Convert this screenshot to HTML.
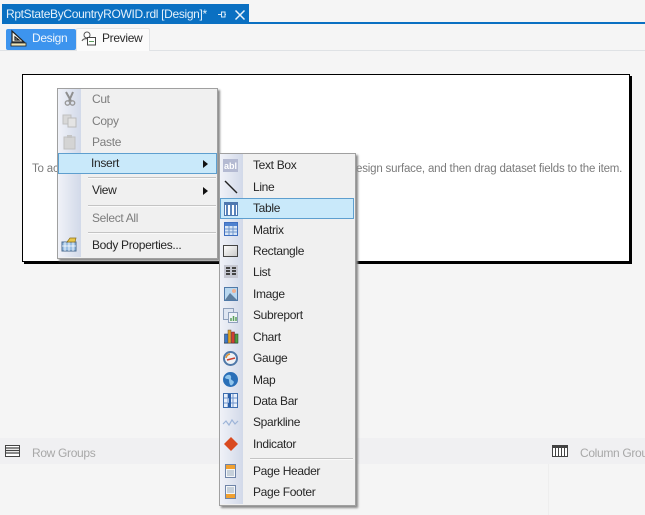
<!DOCTYPE html>
<html><head><meta charset="utf-8">
<style>
html,body{margin:0;padding:0;background:#f5f5f5}
#p{position:relative;width:645px;height:515px;overflow:hidden;background:#f5f5f5;font-family:"Liberation Sans",sans-serif;font-size:12px;color:#262626;filter:blur(.3px)}
#p div{position:absolute}
.t{white-space:nowrap;line-height:14px;height:14px;letter-spacing:-.33px}
.g{color:#7d7d7d}
.s{background:#c4c4c4;height:1px;border-bottom:1px solid #fafafa}
svg{position:absolute;overflow:visible}
</style></head><body><div id="p">

<div style="left:2px;top:4px;width:247px;height:20px;background:#0a70c2"></div>
<div style="left:249px;top:22px;width:396px;height:2px;background:#0a70c2"></div>
<div class="t" style="left:6px;top:7px;color:#e4f0fa">RptStateByCountryROWID.rdl [Design]*</div>
<svg style="left:217px;top:10px" width="12" height="9"><path d="M1 4.500H4M4.500 2V7H8V2ZM8 4.500H9" fill="none" stroke="#dcebf8" stroke-width="1"/></svg>
<svg style="left:235px;top:10px" width="10" height="10"><path d="M.5 .5L9.500 9.500M9.500 .5L.5 9.500" stroke="#e8f2fb" stroke-width="1.500"/></svg>

<div style="left:0;top:50px;width:645px;height:1px;background:#dfe2e5"></div>
<div style="left:76px;top:28px;width:72px;height:22px;background:#fbfbfb;border:1px solid #e2e4e6;border-bottom:none;border-radius:2px 2px 0 0"></div>
<div style="left:6px;top:29px;width:70px;height:21px;background:#3d94ee;border-radius:2px"></div>
<svg style="left:10px;top:30px" width="17" height="17"><path d="M2 1V12H14L2 1ZM5 7V10H9Z" fill="#f4f4ea" stroke="#222" stroke-width="1.200"/><rect x="1" y="13" width="15" height="3" fill="#eee5b8" stroke="#222" stroke-width=".8"/></svg>
<div class="t" style="left:32px;top:31px;color:#eef5fd">Design</div>
<svg style="left:81px;top:31px" width="16" height="15"><circle cx="6" cy="4" r="3" fill="#fff" stroke="#555"/><path d="M1 10C2 7 8 7 9 9" fill="#eee" stroke="#555"/><rect x="6.500" y="6.500" width="8" height="7.500" fill="#fff" stroke="#444"/><path d="M8 10.500H13" stroke="#5a9a5a"/></svg>
<div class="t" style="left:102px;top:31px;color:#2a2a2a">Preview</div>

<div style="left:22px;top:74px;width:606px;height:186px;background:#fff;border:1px solid #000;box-shadow:2px 2px 0 #000"></div>
<div class="t" style="left:32px;top:162px;color:#7b7b7b;font-size:11.500px;letter-spacing:-.19px">To ac</div>
<div class="t" style="left:356px;top:162px;color:#7b7b7b;font-size:11.500px;letter-spacing:-.19px">esign surface, and then drag dataset fields to the item.</div>

<div style="left:0;top:438px;width:645px;height:26px;background:#f0f0f2"></div>
<div style="left:548px;top:464px;width:1px;height:51px;background:#eeeeee"></div>
<svg style="left:5px;top:445px" width="16" height="13"><rect x=".5" y=".5" width="14" height="11" fill="#fff" stroke="#444"/><path d="M0 3H15M0 5.500H15M0 8H15" stroke="#444" stroke-width="1.200"/></svg>
<div class="t" style="left:32px;top:446px;color:#a8a8a8">Row Groups</div>
<svg style="left:552px;top:445px" width="16" height="13"><rect x=".5" y=".5" width="15" height="11" fill="#fff" stroke="#444"/><rect x="0" y="0" width="16" height="3" fill="#444"/><path d="M3.500 0V12M6.500 0V12M9.500 0V12M12.500 0V12" stroke="#444"/></svg>
<div class="t" style="left:580px;top:446px;color:#a8a8a8">Column Groups</div>

<!-- menu 1 -->
<div style="left:57px;top:88px;width:159px;height:169px;background:#f0f0f0;border:1px solid #a0a0a0;box-shadow:2px 2px 2px #8a8a8a"></div>
<div style="left:58px;top:89px;width:23px;height:168px;background:linear-gradient(90deg,#f0f2f8,#d2d9e9)"></div>
<div style="left:58px;top:153px;width:157px;height:19px;background:#c9e9fa;border:1px solid #5e9fcf"></div>
<div class="t g" style="left:92px;top:92px">Cut</div>
<div class="t g" style="left:92px;top:114px">Copy</div>
<div class="t g" style="left:92px;top:135px">Paste</div>
<div class="t" style="left:91px;top:156px">Insert</div>
<div class="t" style="left:92px;top:183px">View</div>
<div class="t g" style="left:92px;top:211px">Select All</div>
<div class="t" style="left:92px;top:238px">Body Properties...</div>
<div class="s" style="left:88px;top:177px;width:128px"></div>
<div class="s" style="left:88px;top:205px;width:128px"></div>
<div class="s" style="left:88px;top:232px;width:128px"></div>
<svg style="left:203px;top:160px" width="5" height="8"><path d="M0 0L5 4L0 8Z" fill="#111"/></svg>
<svg style="left:203px;top:187px" width="5" height="8"><path d="M0 0L5 4L0 8Z" fill="#111"/></svg>
<svg style="left:63px;top:91px" width="14" height="16"><path d="M3 1L8 10M10 1L6 10" stroke="#8f8f8f" stroke-width="2"/><circle cx="4.500" cy="12" r="2.200" fill="none" stroke="#999" stroke-width="1.400"/><circle cx="9.500" cy="12" r="2.200" fill="none" stroke="#999" stroke-width="1.400"/></svg>
<svg style="left:62px;top:114px" width="16" height="14"><rect x="1" y="1" width="8" height="9" fill="#d8d8d8" stroke="#c0c0c0"/><rect x="6" y="4" width="8" height="9" fill="#e4e4e4" stroke="#bbb"/></svg>
<svg style="left:63px;top:135px" width="14" height="15"><rect x="1" y="2" width="11" height="12" fill="#d4d4d4" stroke="#c0c0c0"/><rect x="4" y="0" width="5" height="3" fill="#c4c4c4"/></svg>
<svg style="left:61px;top:237px" width="17" height="15"><rect x="1" y="5" width="14" height="9" fill="#9cc0e4" stroke="#4a6a8e"/><path d="M4 5V14M8 5V14M12 5V14M1 9H15" stroke="#fff" stroke-width=".8"/><path d="M6 5L9 1H15L14 5Z" fill="#e8c64a" stroke="#8a6f1a" stroke-width=".7"/></svg>

<!-- menu 2 -->
<div style="left:219px;top:153px;width:135px;height:351px;background:#f0f0f0;border:1px solid #a0a0a0;box-shadow:2px 2px 2px #8a8a8a"></div>
<div style="left:220px;top:154px;width:23px;height:350px;background:linear-gradient(90deg,#f0f2f8,#d2d9e9)"></div>
<div style="left:220px;top:198px;width:132px;height:19px;background:#c9e9fa;border:1px solid #5e9fcf"></div>
<div class="t" style="left:253px;top:158px">Text Box</div>
<div class="t" style="left:253px;top:180px">Line</div>
<div class="t" style="left:253px;top:201px">Table</div>
<div class="t" style="left:253px;top:223px">Matrix</div>
<div class="t" style="left:253px;top:244px">Rectangle</div>
<div class="t" style="left:253px;top:265px">List</div>
<div class="t" style="left:253px;top:287px">Image</div>
<div class="t" style="left:253px;top:308px">Subreport</div>
<div class="t" style="left:253px;top:330px">Chart</div>
<div class="t" style="left:253px;top:351px">Gauge</div>
<div class="t" style="left:253px;top:373px">Map</div>
<div class="t" style="left:253px;top:394px">Data Bar</div>
<div class="t" style="left:253px;top:415px">Sparkline</div>
<div class="t" style="left:253px;top:437px">Indicator</div>
<div class="t" style="left:253px;top:464px">Page Header</div>
<div class="t" style="left:253px;top:485px">Page Footer</div>
<div class="s" style="left:250px;top:458px;width:103px"></div>

<svg style="left:223px;top:158px" width="16" height="15"><rect x="0" y="1" width="15" height="13" fill="#b4bad2"/><text x="1" y="11" font-size="9" font-family="Liberation Sans,sans-serif" fill="#fff" font-weight="bold">abl</text></svg>
<svg style="left:224px;top:180px" width="14" height="14"><path d="M1 1L13 13" stroke="#222" stroke-width="1.400"/></svg>
<svg style="left:224px;top:202px" width="15" height="14"><rect x=".5" y=".5" width="13" height="13" fill="#fff" stroke="#4e78b0"/><rect x="1" y="1" width="12" height="2" fill="#4e78b0"/><path d="M3 3V13M7 3V13M11 3V13" stroke="#5a84bb" stroke-width="2"/></svg>
<svg style="left:224px;top:222px" width="15" height="14"><rect x=".5" y=".5" width="13" height="13" fill="#d8e6f6" stroke="#3f6fc0"/><rect x="1" y="1" width="12" height="3" fill="#4f82d0"/><path d="M1 7H13M1 10H13M5 4V13M9 4V13" stroke="#6f95cc"/></svg>
<svg style="left:223px;top:245px" width="16" height="13"><defs><linearGradient id="r" x1="0" y1="0" x2="1" y2="1"><stop offset="0" stop-color="#fff"/><stop offset="1" stop-color="#c8c8c8"/></linearGradient></defs><rect x=".5" y=".5" width="14" height="11" fill="url(#r)" stroke="#444"/></svg>
<svg style="left:224px;top:265px" width="14" height="14"><rect x="0" y="0" width="14" height="13" fill="#c6c8d2"/><path d="M2 3H6M8 3H12M2 6H6M8 6H12M2 9H6M8 9H12" stroke="#444" stroke-width="2"/></svg>
<svg style="left:224px;top:287px" width="15" height="14"><rect x=".5" y=".5" width="13" height="13" fill="#b9d7ef" stroke="#4f79a8"/><path d="M1 13L6 6L13 13Z" fill="#5e7e9e"/><circle cx="10" cy="4" r="2" fill="#f0b090"/></svg>
<svg style="left:223px;top:308px" width="16" height="15"><rect x=".5" y=".5" width="10" height="11" fill="#dfe6f2" stroke="#8ea0bc"/><rect x="5.500" y="4.500" width="9" height="10" fill="#eef2f8" stroke="#8ea0bc"/><path d="M8 13V10M10.500 13V8M13 13V9" stroke="#5aa05a" stroke-width="1.500"/></svg>
<svg style="left:223px;top:329px" width="16" height="15"><path d="M1 14H15" stroke="#345"/><rect x="1.500" y="5" width="3.500" height="9" fill="#3c78c8" stroke="#234" stroke-width=".5"/><rect x="5" y="1" width="3" height="13" fill="#e0a020" stroke="#654" stroke-width=".5"/><rect x="8.500" y="3" width="3" height="11" fill="#d04030" stroke="#622" stroke-width=".5"/><rect x="12" y="5" width="3" height="9" fill="#50a040" stroke="#242" stroke-width=".5"/></svg>
<svg style="left:223px;top:351px" width="16" height="15"><circle cx="7.500" cy="7.500" r="6.500" fill="#eef2f6" stroke="#4f78a8" stroke-width="2"/><path d="M3 7A5 5 0 0 1 7 3" stroke="#e09030" fill="none" stroke-width="1.500"/><path d="M4 9L12 7" stroke="#c84030" stroke-width="1.500"/></svg>
<svg style="left:223px;top:372px" width="16" height="15"><circle cx="7.500" cy="7.500" r="7.500" fill="#2a6fb8"/><path d="M2 5C5 1 9 3 8 6S13 8 10 12 6 10 6 8 2 8 2 5Z" fill="#8fc4ec"/></svg>
<svg style="left:223px;top:393px" width="16" height="15"><rect x=".5" y=".5" width="14" height="14" fill="#e8f0fa" stroke="#3f6fb0"/><path d="M1 5H14M1 10H14M5 1V14M10 1V14" stroke="#6f95cc"/><rect x="5" y="1" width="3" height="4" fill="#2a5fa8"/><rect x="6" y="5" width="2" height="5" fill="#2a5fa8"/><rect x="5" y="10" width="3" height="4" fill="#2a5fa8"/></svg>
<svg style="left:223px;top:417px" width="16" height="11"><path d="M0 7L3 4L6 8L9 3L12 7L15 4" fill="none" stroke="#9db4d8" stroke-width="1.200"/></svg>
<svg style="left:224px;top:437px" width="14" height="14"><path d="M7 0L14 7L7 14L0 7Z" fill="#d94a20"/></svg>
<svg style="left:225px;top:464px" width="12" height="14"><rect x=".5" y=".5" width="10" height="13" fill="#f4f6f8" stroke="#6f84a8"/><rect x="1" y="1" width="9" height="4" fill="#f0a030"/><path d="M2 7H9M2 9H9M2 11H9" stroke="#9ab"/></svg>
<svg style="left:225px;top:485px" width="12" height="14"><rect x=".5" y=".5" width="10" height="13" fill="#f4f6f8" stroke="#6f84a8"/><path d="M2 3H9M2 5H9M2 7H9" stroke="#9ab"/><rect x="1" y="9" width="9" height="4" fill="#f0a030"/></svg>
</div></body></html>
